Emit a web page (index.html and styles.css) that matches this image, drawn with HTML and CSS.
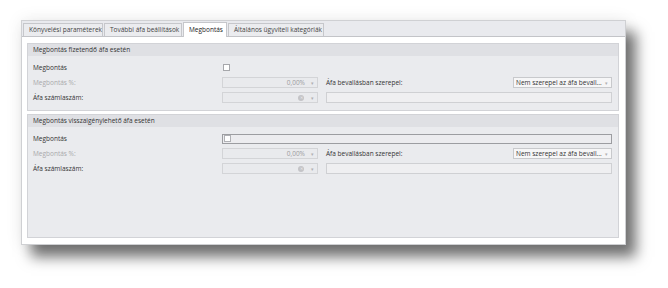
FILE: index.html
```html
<!DOCTYPE html>
<html lang="hu">
<head>
<meta charset="utf-8">
<link rel="stylesheet" href="styles.css">
</head>
<body>
<div class="window">
  <div class="tabstrip">
    <div class="tab">Könyvelési paraméterek</div>
    <div class="tab">További áfa beállítások</div>
    <div class="tab active">Megbontás</div>
    <div class="tab">Általános ügyviteli kategóriák</div>
  </div>
  <div class="content">
    <section class="group g1">
      <div class="ghead">Megbontás fizetendő áfa esetén</div>
      <div class="gbody">
        <div class="lbl">Megbontás</div>
        <div class="cbcell"><span class="cb"></span></div>
        <div class="lbl dis">Megbontás %:</div>
        <div class="inp num"><span class="val">0,00%</span><span class="arr">▾</span></div>
        <div class="rest">
          <span class="lbl">Áfa bevallásban szerepel:</span>
          <span class="sel"><span class="seltext">Nem szerepel az áfa bevall...</span><span class="arr">▾</span></span>
        </div>
        <div class="lbl">Áfa számlaszám:</div>
        <div class="inp"><span class="clr">✕</span><span class="arr">▾</span></div>
        <div class="rest"><span class="wide"></span></div>
      </div>
    </section>
    <section class="group g2">
      <div class="ghead">Megbontás visszaigénylehető áfa esetén</div>
      <div class="gbody">
        <div class="lbl">Megbontás</div>
        <div class="cbbar"><span class="cb"></span></div>
        <div class="lbl dis">Megbontás %:</div>
        <div class="inp num"><span class="val">0,00%</span><span class="arr">▾</span></div>
        <div class="rest">
          <span class="lbl">Áfa bevallásban szerepel:</span>
          <span class="sel"><span class="seltext">Nem szerepel az áfa bevall...</span><span class="arr">▾</span></span>
        </div>
        <div class="lbl">Áfa számlaszám:</div>
        <div class="inp"><span class="clr">✕</span><span class="arr">▾</span></div>
        <div class="rest"><span class="wide"></span></div>
      </div>
    </section>
  </div>
</div>
</body>
</html>
```
FILE: styles.css
```css
* { box-sizing: border-box; }
html, body { margin: 0; padding: 0; background: #ffffff; }
body {
  width: 668px;
  height: 288px;
  overflow: hidden;
  font-family: "Open Sans", "Noto Sans", sans-serif;
  font-size: 6.5px;
  color: #333;
}
.window {
  margin: 20px 0 0 21px;
  width: 605px;
  height: 225px;
  background: #fff;
  border: 1px solid #cfd0d3;
  box-shadow: 10px 12px 13px rgba(0,0,0,0.55), 0 0 16px rgba(0,0,0,0.08);
  display: flex;
  flex-direction: column;
}
.tabstrip {
  height: 16px;
  background: #e9eaee;
  border-bottom: 1px solid #c3c4c8;
  display: flex;
  align-items: flex-end;
  padding-left: 1px;
}
.tab {
  height: 13px;
  line-height: 11px;
  padding: 0 5px;
  background: #ebecef;
  border: 1px solid #c6c7cb;
  border-bottom: none;
  margin-right: 1px;
  color: #444;
  white-space: nowrap;
}
.tab:nth-child(1) { width: 80px; }
.tab:nth-child(2) { width: 78px; }
.tab:nth-child(3) { width: 44px; }
.tab:nth-child(4) { width: 96px; }
.tab.active {
  height: 15px;
  background: #fff;
  margin-bottom: -1px;
  line-height: 13px;
  color: #222;
}
.content {
  flex: 1;
  padding: 6px 6px 6px 5px;
  display: flex;
  flex-direction: column;
  gap: 3px;
}
.group {
  border: 1px solid #d2d3d7;
  background: #eaebee;
  display: flex;
  flex-direction: column;
}
.g2 { flex: 1; }
.ghead {
  height: 12px;
  line-height: 11px;
  background: #dfe0e4;
  padding-left: 5px;
  color: #333;
}
.gbody {
  display: grid;
  grid-template-columns: 181px 96px 1fr;
  grid-auto-rows: 11px;
  row-gap: 4px;
  column-gap: 8px;
  padding: 6px 6px 7px 5px;
  align-items: center;
}
.lbl { white-space: nowrap; line-height: 11px; color: #333; }
.lbl.dis { color: #a9a9ab; }
.cbcell { grid-column: 2 / 4; display: flex; align-items: center; padding-left: 1px; }
.cb {
  display: inline-block;
  width: 7px;
  height: 7px;
  background: #fff;
  border: 1px solid #a6a7ab;
}
.cbbar {
  grid-column: 2 / 4;
  height: 10px;
  border: 1px solid #9c9da1;
  background: #ececef;
  display: flex;
  align-items: center;
  padding-left: 1px;
}
.cbbar .cb { width: 7px; height: 7px; border-color: #b0b1b5; }
.inp {
  height: 11px;
  border: 1px solid #d3d4d7;
  background: #e9eaed;
  display: flex;
  align-items: center;
  justify-content: flex-end;
  padding-right: 2px;
  color: #9c9c9e;
}
.inp .val { margin-right: 4px; }
.arr { font-size: 5px; color: #b0b0b3; width: 6px; text-align: center; }
.clr {
  width: 6px; height: 6px;
  border-radius: 50%;
  background: #c4c4c7;
  color: #ececee;
  font-size: 4px;
  line-height: 6px;
  text-align: center;
  margin-right: 5px;
}
.rest {
  display: flex;
  justify-content: space-between;
  align-items: center;
  height: 11px;
}
.sel {
  width: 99px;
  height: 11px;
  border: 1px solid #c8c9cc;
  background: #f6f6f7;
  display: flex;
  align-items: center;
  justify-content: space-between;
  padding: 0 2px 0 2px;
  color: #333;
  white-space: nowrap;
}
.wide {
  flex: 1;
  height: 11px;
  border: 1px solid #cfd0d3;
  background: #efeff1;
}
```
